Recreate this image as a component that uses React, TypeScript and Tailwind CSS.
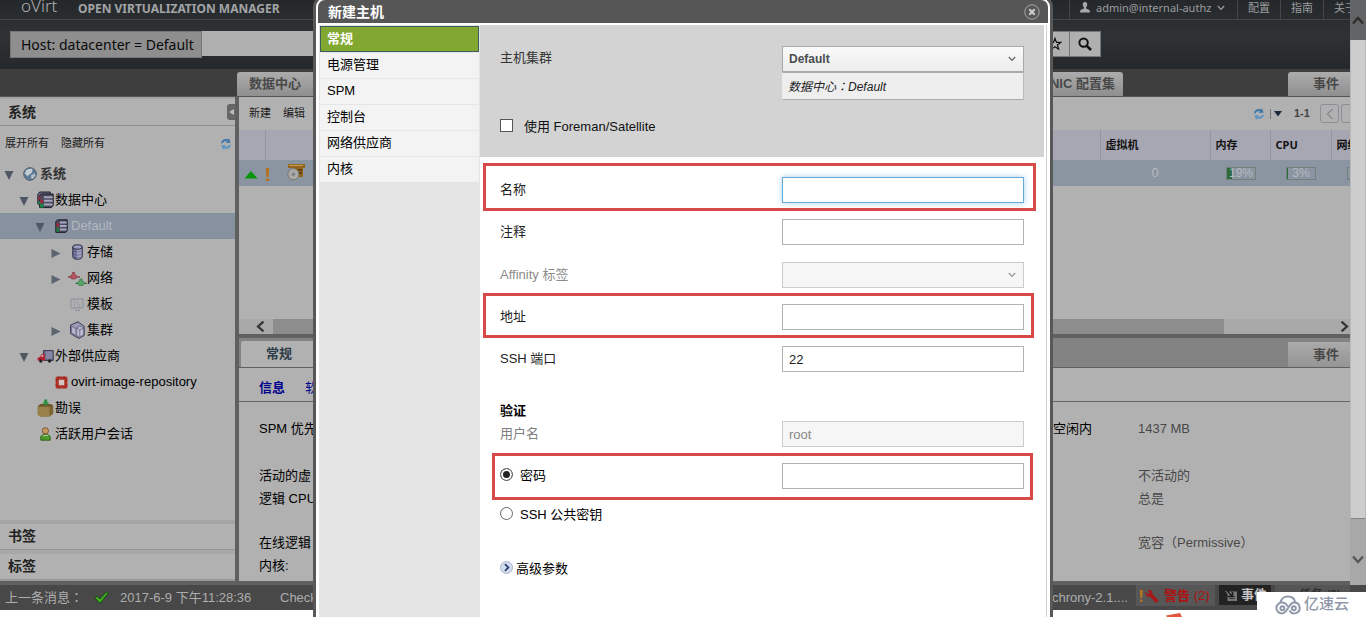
import { useState } from "react";
import type { ReactNode } from "react";

const SANS = "font-['Liberation_Sans','Noto_Sans_CJK_SC',sans-serif]";
const NOTO = "font-['Noto_Sans','Noto_Sans_CJK_SC',sans-serif]";

function Chevron({ className }: { className?: string }) {
  return (
    <svg viewBox="0 0 8 6" className={className ?? "h-[6px] w-2"} fill="none" stroke="currentColor" strokeWidth="1.3">
      <path d="M0.8 1 4 4.4 7.2 1" />
    </svg>
  );
}

function Colon() {
  return <span className="font-['Noto_Sans_CJK_TC',sans-serif]">：</span>;
}

function RefreshIcon() {
  return (
    <svg viewBox="0 0 12 12" className="h-3 w-3">
      <path d="M1 5.2C1.4 2 4.6.2 7.6 1.5L9 .2 10.6 4.8 5.8 5 7 3.6C5 3 3.4 3.6 2.8 5.2z" fill="#3f78a8" />
      <path d="M11 6.8c-.4 3.2-3.6 5-6.6 3.7L3 11.8 1.4 7.2 6.2 7 5 8.4c2 .6 3.6 0 4.2-1.6z" fill="#5d94c0" />
    </svg>
  );
}

function GlobeIcon() {
  return (
    <svg viewBox="0 0 14 14" className="h-[14px] w-[14px]">
      <circle cx="7" cy="7" r="6.3" fill="#5f7d98" stroke="#4a5866" />
      <path d="M3 3.5C4 2 7 1.2 9.4 2L9 5.4 6.4 7.4 4.4 9 1.6 6.6z" fill="#c3ccd2" />
      <path d="M8.4 8l3.6-1.4.4 1.8-2.4 3.4-2-.6z" fill="#b4c0c8" />
    </svg>
  );
}

function ServerIcon() {
  return (
    <svg viewBox="0 0 13 14" className="h-[14px] w-[13px]">
      <path d="M.8 2.6 2.8.8h9.4v11L10.4 13.4H.8z" fill="#4c4c5e" stroke="#1f1f2c" />
      <path d="M5 3.4h6.6M5 6.9h6.6M5 10.4h6.6" stroke="#a6a6c0" strokeWidth="2" />
      <path d="M1.4 4.2h2.4v3.6H1.4z" fill="#a02838" />
      <path d="M1.400 8.400h2.400V13H1.400z" fill="#1f7a3c" />
    </svg>
  );
}

function ServersIcon() {
  return (
    <svg viewBox="0 0 17 18" className="h-[18px] w-[17px]">
      <path d="M.8 3.4 2.6 1h10.600v12H.8z" fill="#6a6a80" stroke="#1f1f2c" />
      <path d="M2.600 5 4.400 3h11.800v11.600l-1.800 2H2.600z" fill="#4c4c5e" stroke="#1f1f2c" />
      <path d="M7 6.200h8.600M7 9.800h8.600M7 13.400h8.600" stroke="#a6a6c0" strokeWidth="2" />
      <path d="M1.400 5.600h2.200v3H1.400z" fill="#a02838" />
      <path d="M1.400 10.500h2.400V13H1.400zM3.200 13.200h3.400v3.400H3.200z" fill="#1f8a44" />
      <path d="M3.200 9h2.800v3H3.200z" fill="#a02838" />
    </svg>
  );
}

function StorageIcon() {
  return (
    <svg viewBox="0 0 11 16" className="h-4 w-[11px]">
      <path d="M.8 3.2v9.6c0 1.4 2 2.4 4.7 2.4s4.7-1 4.7-2.4V3.2z" fill="#7676a0" stroke="#26263c" />
      <path d="M5 5.4v9.4c2.6 0 4.600-.8 4.600-2V4.400z" fill="#a5a5c2" />
      <path d="M1 6.600c1 1.600 8 1.600 9 0M1 9.800c1 1.600 8 1.600 9 0M1 12.600c1 1.600 8 1.600 9 0" fill="none" stroke="#54547a" strokeWidth=".6" />
      <ellipse cx="5.5" cy="3" rx="4.7" ry="2.2" fill="#9d9dbe" stroke="#26263c" />
    </svg>
  );
}

function NetworkIcon() {
  return (
    <svg viewBox="0 0 19 15" className="h-[15px] w-[19px] shrink-0">
      <path d="M0 6h12" stroke="#852c34" strokeWidth="1.2" />
      <path d="M2 5.400C2.600 3.800 4.400 3.400 4.400 3.400V1.400h2.200v2s1.800.4 2.400 2L7.400 8H3.600z" fill="#b65660" stroke="#7a2c36" strokeWidth=".6" />
      <path d="M7.500 12.400H19" stroke="#27713a" strokeWidth="1.2" />
      <path d="M9.400 12c.6-1.600 2.400-2 2.400-2V8h2.400v2s1.800.4 2.400 2L15 14.400h-4z" fill="#57a468" stroke="#27713a" strokeWidth=".6" />
    </svg>
  );
}

function TemplateIcon() {
  return (
    <svg viewBox="0 0 14 13" className="h-[13px] w-[14px]" fill="none" stroke="#8d8d9f">
      <path d="M1 1h12v9H1zM5 12.4h5" />
      <path d="M4.4 1v9M7.2 3v5.4M9.6 5.6V10" strokeDasharray="1.5 1" />
    </svg>
  );
}

function ClusterIcon() {
  return (
    <svg viewBox="0 0 15 18" className="h-[18px] w-[15px]" stroke="#2e2e44" strokeWidth=".9">
      <path d="M.6 4 8 .8 14.2 5.400v9L9 17.400.6 12.600z" fill="#9a9ab6" />
      <path d="M1.400 5.200 6 7.600v6.800L1.400 12z" fill="#b4b4ca" stroke="#6a6a88" />
      <path d="M6.600 7 10 5l3.600 2v6.800L9.600 16.400l-3-2z" fill="#bdbdd0" stroke="#6a6a88" />
      <path d="M9.800 9v7M6.600 7l3.200 2 3.800-2" fill="none" stroke="#6a6a88" />
    </svg>
  );
}

function TruckIcon() {
  return (
    <svg viewBox="0 0 17 13" className="h-[13px] w-[17px]">
      <path d="M6.4.6h9.8v9.8H6.4z" fill="#6c6c8c" stroke="#36364c" />
      <path d="M9 1.4h6.4v7.4H9z" fill="#8585a6" />
      <path d="M.6 10.600V7.800l2.200-.8L4.600 4H8v6.600z" fill="#b5202e" />
      <path d="M3.6 6.8 5 4.8h1.4v2z" fill="#c6b6bc" />
      <circle cx="3.8" cy="11" r="1.7" fill="#222" />
      <circle cx="12.6" cy="11" r="1.7" fill="#222" />
    </svg>
  );
}

function ImageRepoIcon() {
  return (
    <svg viewBox="0 0 13 13" className="h-[13px] w-[13px]">
      <rect x=".6" y=".6" width="11.8" height="11.8" rx="1.500" fill="#b03428" />
      <path d="M.6 4h2M.6 9h2M10.400 4h2M10.400 9h2M4 .6v2M9 .6v2M4 10.400v2M9 10.400v2" stroke="#8a2218" />
      <rect x="3.800" y="3.800" width="5.400" height="5.400" fill="#d3c5c2" />
    </svg>
  );
}

function BoxIcon() {
  return (
    <svg viewBox="0 0 17 18" className="h-[18px] w-[17px]">
      <path d="M.8 7.400 3.400 5h10.200l2.600 1.800v8L12.600 17.400H3.400L.8 15.800z" fill="#7c6230" />
      <path d="M.8 7.400h11.800v10H3.400L.8 15.800z" fill="#98804a" />
      <path d="M3.400 5h10.200l2.600 1.800-3.600.6H.8z" fill="#6e5628" />
      <path d="M7.2.6h3v3h2L8.7 7 5.200 3.600h2z" fill="#2f8f3f" />
    </svg>
  );
}

function UserIcon() {
  return (
    <svg viewBox="0 0 11 14" className="h-[14px] w-[11px]">
      <circle cx="5.4" cy="3.8" r="3.1" fill="#c59763" stroke="#7a4f26" strokeWidth=".9" />
      <path d="M.8 13.2V9.6C1.6 8 3.6 7.4 5.4 7.4s4 .6 4.8 2.2v3.6z" fill="#4e9a2c" stroke="#2a5c18" strokeWidth=".9" />
      <path d="M3 8.4h5" stroke="#bcd0a8" />
    </svg>
  );
}

type TreeNode = { label: string; pad: string; arrow: "open" | "closed" | "none"; icon: ReactNode; bold?: boolean; selected?: boolean };

const TREE: TreeNode[] = [
  { label: "系统", pad: "pl-[3px]", arrow: "open", icon: <GlobeIcon />, bold: true },
  { label: "数据中心", pad: "pl-[18px]", arrow: "open", icon: <ServersIcon /> },
  { label: "Default", pad: "pl-[34px]", arrow: "open", icon: <ServerIcon />, selected: true },
  { label: "存储", pad: "pl-[50px]", arrow: "closed", icon: <StorageIcon /> },
  { label: "网络", pad: "pl-[50px]", arrow: "closed", icon: <NetworkIcon /> },
  { label: "模板", pad: "pl-[50px]", arrow: "none", icon: <TemplateIcon /> },
  { label: "集群", pad: "pl-[50px]", arrow: "closed", icon: <ClusterIcon /> },
  { label: "外部供应商", pad: "pl-[18px]", arrow: "open", icon: <TruckIcon /> },
  { label: "ovirt-image-repository", pad: "pl-[34px]", arrow: "none", icon: <ImageRepoIcon /> },
  { label: "勘误", pad: "pl-[18px]", arrow: "none", icon: <BoxIcon /> },
  { label: "活跃用户会话", pad: "pl-[18px]", arrow: "none", icon: <UserIcon /> },
];

function TreeRow({ node }: { node: TreeNode }) {
  return (
    <li className={`flex h-[26px] items-center ${node.pad} ${node.selected ? "bg-[#8791a0] text-[#b3b8c0]" : "text-black"}`}>
      <span className="flex w-[18px] shrink-0 pt-[3px]">
        {node.arrow === "open" && (
          <svg viewBox="0 0 10 9" className="ml-px h-[9px] w-[10px]"><path d="M.5 0h9L5 9z" fill="#4f5863" /></svg>
        )}
        {node.arrow === "closed" && (
          <svg viewBox="0 0 10 9" className="ml-px h-[9px] w-[10px]"><path d="M.5 0v9L9.5 4.5z" fill="#5c6570" /></svg>
        )}
      </span>
      <span className="mr-px flex w-[18px] shrink-0 items-center justify-center">{node.icon}</span>
      <span className={`whitespace-nowrap text-[13px] ${node.bold ? "font-bold text-[#333]" : ""}`}>{node.label}</span>
    </li>
  );
}

function Header() {
  return (
    <header className={`bg-gradient-to-b from-[#24282b] via-[#2e3235] to-[#25292c] pr-4 ${NOTO}`}>
      <div className="flex h-5 items-start border-b border-[#43474a] text-[11px] text-[#9a9c9e]">
        <span className="-mt-[7px] ml-[21px] w-[57px] text-[17px] font-light leading-[26px] text-[#b0b0b0]">oVirt</span>
        <span className="text-[12px] font-bold leading-[17px] text-[#a2a4a6]">OPEN VIRTUALIZATION MANAGER</span>
        <nav className="ml-auto flex h-[19px] leading-[15px]">
          <button className="flex w-[168px] items-start gap-[6px] whitespace-nowrap border-l border-[#43474a] pl-[10px]">
            <svg viewBox="0 0 10 11" className="mt-[2px] h-[11px] w-[10px]" fill="#a5a7a9">
              <path d="M5 0C3.400 0 2.600 1.200 2.800 2.800c.1 1.200.6 2.200 1.200 2.800v1L1 7.800C.3 8.200 0 9 0 10.600h10C10 9 9.700 8.200 9 7.800L6 6.600v-1c.6-.6 1.100-1.600 1.200-2.800C7.400 1.200 6.600 0 5 0z" />
            </svg>
            admin@internal-authz
            <Chevron className="mt-[5px] h-[6px] w-2" />
          </button>
          <a href="#config" className="w-[43px] border-l border-[#43474a] pl-[10px]">配置</a>
          <a href="#guide" className="w-[43px] border-l border-[#43474a] pl-[10px]">指南</a>
          <a href="#about" className="-mr-[2px] w-[29px] whitespace-nowrap border-l border-[#43474a] pl-[10px]">关于</a>
        </nav>
      </div>
      <div className="flex h-[49px] items-start pt-[11px]">
        <label htmlFor="search" className="ml-[10px] flex h-[27px] w-[192px] items-center whitespace-nowrap border border-[#777] bg-[#8e8e8e] pl-[10px] text-[14px] text-[#0a0a0a]">
          Host: datacenter = Default
        </label>
        <input id="search" className="h-[25px] flex-1 bg-[#b0b0b0] outline-none" />
        <button aria-label="收藏" className="flex h-[26px] w-[30px] items-center justify-center border border-[#777] bg-[#b0b0b0]">
          <svg viewBox="0 0 14 14" className="h-[14px] w-[14px]" fill="none" stroke="#111" strokeWidth="1.2">
            <path d="M7 1.400 8.500 5.400h4.200L9.400 8l1.200 4.200L7 9.800l-3.600 2.400L4.600 8 1.300 5.400h4.200z" />
          </svg>
        </button>
        <button aria-label="搜索" className="mr-[249px] flex h-[26px] w-[31px] items-center justify-center border border-l-0 border-[#777] bg-[#b0b0b0]">
          <svg viewBox="0 0 14 14" className="h-[14px] w-[14px]" fill="none" stroke="#111">
            <circle cx="5.600" cy="5.600" r="4.200" strokeWidth="2" />
            <path d="m8.800 8.800 4.200 4.200" strokeWidth="2.600" />
          </svg>
        </button>
      </div>
    </header>
  );
}

const TAB = "flex h-6 items-center whitespace-nowrap rounded-t-[3px] bg-gradient-to-b from-[#acacac] to-[#8f8f8f] text-[13px] font-bold text-[#484848]";

function MainTabs() {
  return (
    <div className="flex h-7 shrink-0 items-end border-b border-[#555] bg-[#3e3e3e] pr-4 pt-[3px]">
      <button className={`${TAB} ml-[237px] w-[90px] pl-3`}>数据中心</button>
      <button className={`${TAB} ml-auto mr-[165px] w-[83px] justify-end pr-2`}>NIC 配置集</button>
      <button className={`${TAB} w-[62px] rounded-tr-none pl-[25px]`}>事件</button>
    </div>
  );
}

function SidePanel() {
  return (
    <aside className="flex w-[235px] shrink-0 flex-col border-t-2 border-[#a5a5a5] bg-[#b1b1b1]">
      <div className="flex h-[27px] items-center justify-between border-b border-[#8f8f8f] pl-2 text-[14px] font-bold text-[#222]">
        系统
        <button aria-label="折叠" className="flex h-4 w-2 items-center justify-center rounded-l-[3px] bg-[#666]">
          <svg viewBox="0 0 5 6" className="h-[6px] w-[5px]"><path d="M5 0v6L0 3z" fill="#bbb" /></svg>
        </button>
      </div>
      <div className="flex h-[35px] items-center pl-[5px] pr-[3px] text-[11px] text-[#1c1c1c]">
        <button>展开所有</button>
        <button className="ml-3">隐藏所有</button>
        <span className="ml-auto"><RefreshIcon /></span>
      </div>
      <ul className="flex-1">
        {TREE.map((n) => <TreeRow key={n.label} node={n} />)}
      </ul>
      <button className="h-[30px] border-b border-t-4 border-b-[#979797] border-t-[#a5a5a5] pl-2 text-left text-[14px] font-bold text-[#222]">书签</button>
      <button className="h-[31px] border-b-2 border-t-4 border-b-[#999] border-t-[#a8a8a8] pl-2 text-left text-[14px] font-bold text-[#222]">标签</button>
    </aside>
  );
}

function Meter({ value, bar }: { value: string; bar: string }) {
  return (
    <div className="relative ml-4 flex h-[13px] w-[30px] items-center justify-center border border-[#72807c] text-[12px] text-[#b4babf]">
      <span className={`absolute inset-y-0 left-0 bg-[#2f6b3c] ${bar}`} />
      <span className="relative">{value}</span>
    </div>
  );
}

function HostTable() {
  const th = "border-l border-[#9595a0] pl-[5px] text-left font-bold";
  return (
    <table className="w-full table-fixed border-collapse text-[11px]">
      <colgroup>
        <col className="w-[26px]" /><col /><col className="w-[110px]" /><col className="w-[60px]" /><col className="w-[61px]" /><col className="w-[19px]" />
      </colgroup>
      <thead>
        <tr className="h-[30px] bg-[#a7a7b3] text-[#111]">
          <th /><th className={th} /><th className={th}>虚拟机</th><th className={th}>内存</th>
          <th className={`${th} ${NOTO}`}>CPU</th><th className={`${th} overflow-hidden whitespace-nowrap`}>网络</th>
        </tr>
      </thead>
      <tbody>
        <tr className="h-[26px] bg-[#8791a0]/90">
          <td><svg viewBox="0 0 14 8" className="ml-[5px] mt-1 h-2 w-[14px]"><path d="M7 0l6.500 7.500H.5z" fill="#06960a" /></svg></td>
          <td>
            <div className="flex items-center">
              <svg viewBox="0 0 5 13" className="mt-[2px] h-[13px] w-[5px]"><path d="M.8 0h3.400L3.600 9H1.400zM1 10.400h3V13H1z" fill="#b5701c" /></svg>
              <svg viewBox="0 0 18 18" className="-mt-[3px] ml-[17px] h-[18px] w-[18px]">
                <path d="M1 1h17v4H1zM8 5h8v9H8z" fill="#93651c" />
                <path d="M2 2.400h14" stroke="#c9a05a" />
                <path d="M11 7h4M11 10h4" stroke="#4f3814" strokeWidth="1.400" />
                <circle cx="6.400" cy="11.200" r="5.600" fill="#a9a9a6" stroke="#6d6a60" strokeWidth=".8" />
                <circle cx="6.400" cy="11.200" r="1.700" fill="#7d848c" />
              </svg>
            </div>
          </td>
          <td className="text-center text-[13px] text-[#b4babf]">0</td>
          <td><Meter value="19%" bar="w-[5px]" /></td>
          <td><Meter value="3%" bar="w-px" /></td>
          <td><div className="ml-4 h-[13px] border border-r-0 border-[#72807c]" /></td>
        </tr>
      </tbody>
    </table>
  );
}

function DetailRow({ a, b, c, className }: { a: string; b?: string; c?: string; className?: string }) {
  return (
    <div className={`flex h-[23px] items-center whitespace-nowrap ${className ?? ""}`}>
      <span className="flex-1">{a}</span>
      <span className="w-[85px]">{b}</span>
      <span className="w-[212px] text-[#484848]">{c}</span>
    </div>
  );
}

function Content() {
  return (
    <main className="flex min-w-0 flex-1 flex-col bg-[#b1b1b1]">
      <div className="flex h-[33px] shrink-0 items-center pl-[10px] text-[11px] text-[#1c1c1c]">
        <button>新建</button>
        <button className="ml-3">编辑</button>
        <div className="ml-auto flex items-center">
          <RefreshIcon />
          <span className="ml-[5px] h-[10px] w-px bg-[#777]" />
          <svg viewBox="0 0 8 6" className="ml-[3px] h-[6px] w-2"><path d="M0 0h8L4 5.600z" fill="#1a2a3c" /></svg>
          <span className="ml-3 w-[26px] font-bold text-[#444]">1-1</span>
          <button aria-label="上一页" className="flex h-[19px] w-[19px] items-center justify-center rounded-[3px] border border-[#8e8e96] text-[#8c8c94]">
            <svg viewBox="0 0 8 12" className="h-3 w-2" fill="none" stroke="currentColor" strokeWidth="1.500"><path d="M6.500 1 1.500 6l5 5" /></svg>
          </button>
          <span className="ml-[2px] h-[19px] w-[9px] rounded-l-[3px] border border-r-0 border-[#8e8e96]" />
        </div>
      </div>
      <div className="min-h-[189px]"><HostTable /></div>
      <div className="flex h-[15px] shrink-0 items-center bg-[#a8a8a8] text-[#333]">
        <svg viewBox="0 0 9 11" className="ml-[17px] h-[11px] w-[9px]" fill="none" stroke="currentColor" strokeWidth="2.200"><path d="M7.500.6 2 5.500l5.500 4.900" /></svg>
        <span className="ml-2 h-full flex-1 bg-[#8d8d8d]" />
        <svg viewBox="0 0 9 11" className="ml-[116px] mr-px h-[11px] w-[9px]" fill="none" stroke="currentColor" strokeWidth="2.200"><path d="M1.500.6 7 5.500l-5.500 4.900" /></svg>
      </div>
      <div className="flex h-[34px] shrink-0 items-end justify-between border-b border-t-4 border-b-[#606060] border-t-[#606060] bg-[#838383] text-[13px] font-bold">
        <button className="ml-[2px] h-[26px] w-[90px] rounded-t-[2px] bg-[#b1b1b1] pl-[25px] text-left text-[#2c3c48]">常规</button>
        <button className="h-[25px] w-[62px] bg-gradient-to-b from-[#aaa] to-[#959595] pl-[25px] text-left text-[#484848]">事件</button>
      </div>
      <div className="flex h-[34px] shrink-0 items-center border-b border-[#666] pl-5 pt-[6px] text-[13px] text-[#00008c]">
        <a href="#info" className="font-bold">信息</a>
        <a href="#software" className="ml-5">软</a>
      </div>
      <div className="flex-1 pl-5 pt-[15px] text-[13px] text-black">
        <DetailRow a="SPM 优先" b="空闲内" c="1437 MB" />
        <DetailRow a="活动的虚" c="不活动的" className="mt-6" />
        <DetailRow a="逻辑 CPU" c="总是" />
        <DetailRow a="在线逻辑" c="宽容（Permissive）" className="mt-[21px]" />
        <DetailRow a="内核:" />
      </div>
    </main>
  );
}

function Footer() {
  return (
    <footer className="flex h-[29px] shrink-0 items-center border-t-4 border-[#606060] bg-[#484848] pr-4 text-[13px] text-[#adadad]">
      <span className="ml-[5px] w-[89px]">上一条消息<Colon /></span>
      <svg viewBox="0 0 15 13" className="h-[13px] w-[15px]"><path d="M1 7.200 3.400 5l2.400 3L12.400.8l1.800 1.600L6 12.400z" fill="#3fae22" stroke="#133f0c" strokeWidth=".9" /></svg>
      <span className="ml-[11px] w-[160px] whitespace-nowrap">2017-6-9 下午11:28:36</span>
      <span>Check</span>
      <span className="ml-auto w-[84px] pt-px">chrony-2.1....</span>
      <button className="flex h-[21px] w-[79px] items-center self-start bg-[#575757] pl-[3px] font-bold text-[#b01010]">
        <svg viewBox="0 0 20 14" className="mr-[5px] h-[14px] w-5 shrink-0">
          <path d="M1 1h2.600L3.200 9H1.500zM1.200 10.400h2.200v2.400H1.200z" fill="#c07818" />
          <path d="M6.400 3 8.800 5.200 10.600 3.600 8.600 1c2.800-.8 5.400 1.200 4.800 4.200l5.600 5.400c.8 1.800-1.200 3.600-2.800 2.600L11 7.800C8.400 8.600 5.800 6 6.400 3z" fill="#a81818" />
        </svg>
        <span className="whitespace-nowrap">警告 <span className="font-normal">(2)</span></span>
      </button>
      <button className="ml-1 flex h-5 w-[52px] items-center self-start overflow-hidden whitespace-nowrap bg-[#222] pl-[6px] font-bold text-[#c4c4c4]">
        <svg viewBox="0 0 12 12" className="mr-1 h-3 w-3 shrink-0">
          <path d="M2.500 2.500H12V12H2.500z" fill="#777" />
          <path d="M4.500 9.500h5M7 7.500h3" stroke="#333" />
          <path d="m.5.500 6.500 6.500M7.500 3v4.500H3" fill="none" stroke="#1c1c1c" strokeWidth="1.600" />
          <path d="m0 1.500 4 4" stroke="#999" />
        </svg>
        事件
      </button>
      <button className="ml-1 h-5 w-[75px] self-start whitespace-nowrap bg-[#555] pl-6 text-left text-[12px] text-[#222]">任务 (0)</button>
    </footer>
  );
}

function PageScrollbar() {
  return (
    <div className="absolute right-0 top-0 z-10 flex h-[585px] w-4 flex-col items-center bg-[#a8a8a8] text-[#555]" aria-hidden="true">
      <div className="flex h-10 w-full justify-center bg-[#626466] pt-4 text-[#2c2c2c]">
        <svg viewBox="0 0 12 9" className="h-[9px] w-3" fill="none" stroke="currentColor" strokeWidth="2.200"><path d="M1 7.500 6 2l5 5.500" /></svg>
      </div>
      <div className="h-[479px] w-full border-x border-b border-[#b8b8b8] border-b-[#888] bg-[#cdcdcd]" />
      <svg viewBox="0 0 12 9" className="mt-9 h-[9px] w-3" fill="none" stroke="currentColor" strokeWidth="2.200"><path d="M1 1.500 6 7l5-5.500" /></svg>
    </div>
  );
}

const INPUT_BASE = "h-[26px] w-[242px] border bg-white px-[6px] text-[13px] text-[#222] outline-none";
const INPUT = `${INPUT_BASE} border-[#b0b3b6]`;
const INPUT_ACTIVE = `${INPUT_BASE} border-[#66a9d8] shadow-[0_0_6px_#a5d0ee]`;
const MARK = "pointer-events-none absolute border-[3px] border-[#d84a4a]";

function Field({ label, id, children, mark, muted }: { label: string; id: string; children: ReactNode; mark?: string; muted?: boolean }) {
  return (
    <div className="relative flex h-[42px] items-center justify-between pl-5 pr-5">
      <label htmlFor={id} className={muted ? "text-[#8a8a8a]" : "text-[#222]"}>{label}</label>
      {children}
      {mark && <span className={`${MARK} ${mark}`} />}
    </div>
  );
}

const SECTIONS = ["常规", "电源管理", "SPM", "控制台", "网络供应商", "内核"];

function NewHostDialog() {
  const [section, setSection] = useState("常规");
  const [auth, setAuth] = useState("password");
  return (
    <section role="dialog" aria-label="新建主机" className="flex h-full w-[740px] flex-col rounded-t-[12px] border-[3px] border-b-0 border-[#585858] bg-white px-[2px] pt-[2px] text-[13px]">
      <div className="flex h-[23px] shrink-0 items-center justify-between rounded-t-[7px] bg-[#565656] pl-[10px] pr-2 text-white">
        <h2 className="text-[14px] font-bold leading-5">新建主机</h2>
        <button aria-label="关闭">
          <svg viewBox="0 0 16 16" className="h-4 w-4" fill="none">
            <circle cx="8" cy="8" r="7.200" stroke="#a5a5a5" />
            <path d="m5.300 5.300 5.400 5.400m0-5.400-5.400 5.400" stroke="#ccc" strokeWidth="2.200" />
          </svg>
        </button>
      </div>
      <div className="mt-[2px] flex flex-1 pl-px pr-px">
        <nav className="flex w-[161px] shrink-0 flex-col bg-[#e4e4e4] pl-px pr-px pt-px">
          {SECTIONS.map((s) => (
            <button
              key={s}
              onClick={() => setSection(s)}
              className={`h-[26px] border pl-[6px] text-left text-[13px] leading-6 ${s === section ? "border-[#3c5c60] bg-[#83a831] font-bold text-white" : "border-[#f3f3f3] border-t-[#e6e6e6] bg-[#f3f3f3] text-black"}`}
            >
              {s}
            </button>
          ))}
        </nav>
        <form className="flex-1 border-r border-[#d0d0d0] pr-[2px]">
          <div className="h-[132px] bg-[#d3d3d3] pl-5 pr-5 pt-[21px]">
            <div className="flex items-start justify-between">
              <label htmlFor="cluster" className="leading-6 text-[#333]">主机集群</label>
              <div className="w-[242px]">
                <div className="relative">
                  <select id="cluster" className="h-[26px] w-full appearance-none border border-[#aaa] bg-gradient-to-b from-[#fafafa] to-[#ececec] px-[6px] text-[12px] font-bold text-[#4a4d50] outline-none">
                    <option>Default</option>
                  </select>
                  <Chevron className="pointer-events-none absolute right-2 top-[10px] h-[6px] w-2 text-[#666]" />
                </div>
                <div className="h-7 border border-[#ececec] border-b-[#aaa] border-r-[#bbb] border-t-[#aaa] bg-[#eee] pl-[5px] text-[12px] italic leading-[26px] text-[#222]">数据中心<Colon />Default</div>
              </div>
            </div>
            <label className="mt-[15px] flex h-6 items-center gap-[11px] text-[#111]">
              <input type="checkbox" className="-mt-1 h-[13px] w-[13px] appearance-none border border-[#555] bg-white checked:bg-[#555]" />
              使用 Foreman/Satellite
            </label>
          </div>
          <div className="pt-3">
            <Field label="名称" id="name" mark="-top-[6px] bottom-0 left-[3px] right-2">
              <input id="name" className={INPUT_ACTIVE} />
            </Field>
            <Field label="注释" id="comment"><input id="comment" className={INPUT} /></Field>
            <div className="pt-px">
              <Field label="Affinity 标签" id="affinity" muted>
                <div className="relative">
                  <select id="affinity" disabled className="block h-[26px] w-[242px] appearance-none border border-[#ccc] bg-[#f6f6f6]"><option></option></select>
                  <Chevron className="pointer-events-none absolute right-2 top-[10px] h-[6px] w-2 text-[#999]" />
                </div>
              </Field>
              <Field label="地址" id="address" mark="-top-[3px] bottom-0 left-[3px] right-[10px]">
                <input id="address" className={INPUT} />
              </Field>
              <Field label="SSH 端口" id="port"><input id="port" defaultValue="22" className={INPUT} /></Field>
            </div>
            <h3 className="mt-5 h-[21px] pl-5 font-bold leading-[21px] text-black">验证</h3>
            <div className="flex h-[26px] items-center justify-between pl-5 pr-5">
              <label htmlFor="user" className="text-[#808080]">用户名</label>
              <input id="user" disabled defaultValue="root" className="h-[26px] w-[242px] border border-[#ccc] bg-[#f6f6f6] px-[6px] text-[13px] text-[#888]" />
            </div>
            <div className="relative mt-2 flex h-[42px] items-center justify-between pl-5 pr-5">
              <AuthOption value="password" label="密码" auth={auth} onChange={setAuth} />
              <input type="password" aria-label="密码" className={INPUT} />
              <span className={`${MARK} -bottom-[3px] -top-[2px] left-3 right-[11px]`} />
            </div>
            <div className="flex h-9 items-center pl-5">
              <AuthOption value="key" label="SSH 公共密钥" auth={auth} onChange={setAuth} />
            </div>
            <button type="button" className="ml-5 mt-6 flex h-6 items-center gap-[3px] text-black">
              <svg viewBox="0 0 13 13" className="-mt-1 h-[13px] w-[13px]">
                <circle cx="6.500" cy="6.500" r="6" fill="#d4ddf0" stroke="#a8b4cc" />
                <path d="M5 3.200 8.400 6.500 5 9.800" fill="none" stroke="#2b3f70" strokeWidth="1.800" />
              </svg>
              高级参数
            </button>
          </div>
        </form>
      </div>
    </section>
  );
}

function AuthOption({ value, label, auth, onChange }: { value: string; label: string; auth: string; onChange: (v: string) => void }) {
  return (
    <label className="flex items-center gap-[7px] text-black">
      <input
        type="radio"
        name="auth"
        checked={auth === value}
        onChange={() => onChange(value)}
        className="-mt-1 h-[13px] w-[13px] appearance-none rounded-full border border-[#666] bg-white checked:bg-[#222] checked:shadow-[inset_0_0_0_2px_white]"
      />
      {label}
    </label>
  );
}

function Watermark() {
  return (
    <div className="absolute bottom-0 right-0 z-30 flex h-[25px] w-[109px] items-center gap-[3px] bg-white pl-[18px] text-[15px] font-medium text-[#8f97a8]">
      <svg viewBox="0 0 26 20" className="h-5 w-[26px] shrink-0" fill="none" stroke="currentColor" strokeWidth="2">
        <path d="M5.500 7.500C6 4 9 1.500 13 1.500S19.500 4 20 7" />
        <path d="M12.500 11.500C11.500 9 9.500 7.600 6.800 7.600a5.400 5.400 0 1 0 0 10.800c6.400 0 6.200-10.800 12.400-10.800a5.400 5.400 0 1 1-4.800 7.800" />
        <circle cx="7.400" cy="13.200" r="2" />
        <circle cx="18.800" cy="13.200" r="2" />
      </svg>
      亿速云
    </div>
  );
}

export default function App() {
  return (
    <div className={`relative flex min-h-screen flex-col overflow-hidden bg-white pb-[7px] ${SANS}`}>
      <Header />
      <MainTabs />
      <div className="flex flex-1 bg-[#606060] pr-4">
        <SidePanel />
        <div className="w-1 shrink-0" />
        <Content />
      </div>
      <Footer />
      <PageScrollbar />
      <div className="absolute inset-x-0 -top-[5px] bottom-0 z-20 flex justify-center">
        <NewHostDialog />
      </div>
      <svg viewBox="0 0 16 4" className="absolute bottom-0 right-[184px] h-1 w-4"><path d="M0 2.500 14 0l2 4H1z" fill="#e2573c" /></svg>
      <Watermark />
    </div>
  );
}
